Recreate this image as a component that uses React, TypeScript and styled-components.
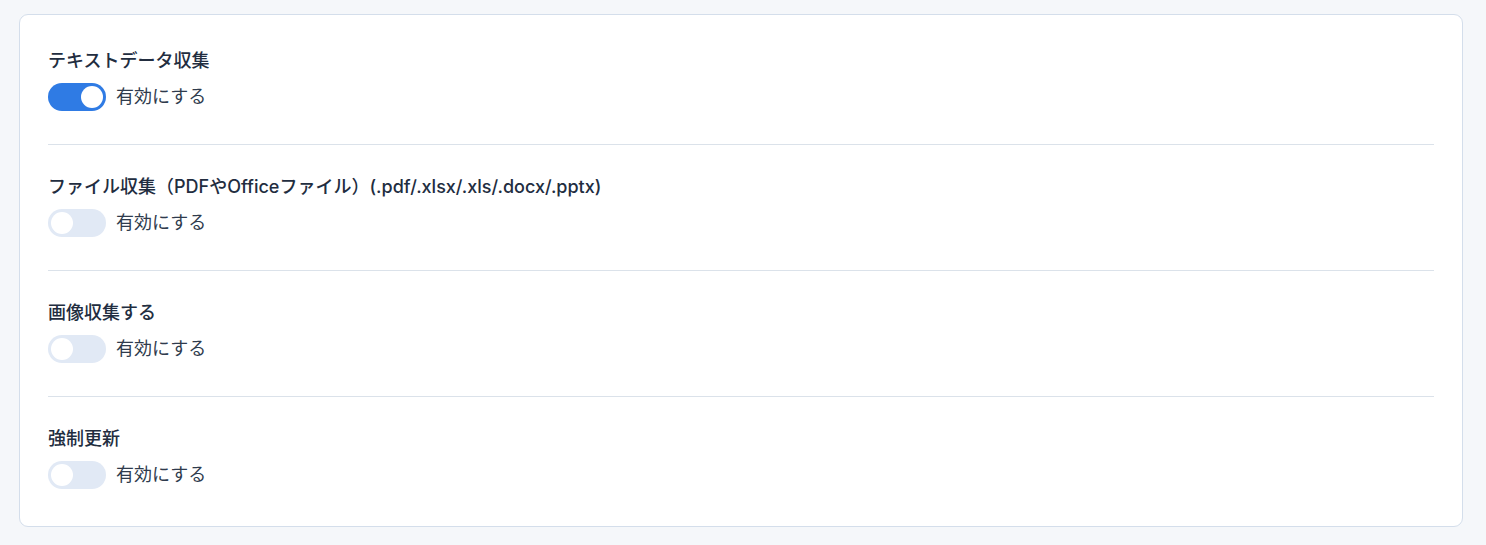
import { useState } from "react";
import styled, { createGlobalStyle } from "styled-components";

const GlobalStyle = createGlobalStyle`
  html, body {
    margin: 0;
    padding: 0;
    background: #f5f7fa;
  }
  body {
    font-family: Inter, "Noto Sans CJK JP", sans-serif;
    color: #1f2a3c;
  }
`;

type Setting = {
  id: string;
  title: string;
  enabled: boolean;
};

const initialSettings: Setting[] = [
  { id: "text", title: "テキストデータ収集", enabled: true },
  {
    id: "file",
    title: "ファイル収集（PDFやOfficeファイル）(.pdf/.xlsx/.xls/.docx/.pptx)",
    enabled: false,
  },
  { id: "image", title: "画像収集する", enabled: false },
  { id: "force", title: "強制更新", enabled: false },
];

function App() {
  const [settings, setSettings] = useState(initialSettings);

  const toggle = (id: string) =>
    setSettings((prev) =>
      prev.map((s) => (s.id === id ? { ...s, enabled: !s.enabled } : s))
    );

  return (
    <>
      <GlobalStyle />
      <Page>
        <Card>
          {settings.map((s) => (
            <Section key={s.id}>
              <Title>{s.title}</Title>
              <SwitchRow>
                <Switch
                  type="button"
                  role="switch"
                  aria-checked={s.enabled}
                  $on={s.enabled}
                  onClick={() => toggle(s.id)}
                >
                  <Knob $on={s.enabled} />
                </Switch>
                <SwitchLabel>有効にする</SwitchLabel>
              </SwitchRow>
            </Section>
          ))}
        </Card>
      </Page>
    </>
  );
}

export default App;

const Page = styled.main`
  padding: 14px 23px 18px 19px;
`;

const Card = styled.div`
  background: #ffffff;
  border: 1px solid #d4deeb;
  border-radius: 9px;
  padding: 4px 28px 4px;
`;

const Section = styled.section`
  padding: 29.5px 0 33.5px;
  border-bottom: 1px solid #dbe2ea;

  &:last-child {
    border-bottom: none;
  }
`;

const Title = styled.div`
  font-size: 18px;
  font-weight: 500;
  line-height: 24px;
  color: #222d3f;
  margin-bottom: 10px;
`;

const SwitchRow = styled.div`
  display: flex;
  align-items: center;
  gap: 10px;
`;

const Switch = styled.button<{ $on: boolean }>`
  position: relative;
  width: 58px;
  height: 28px;
  padding: 0;
  border: none;
  border-radius: 14px;
  background: ${(p) => (p.$on ? "#2f7be4" : "#e1e9f5")};
  cursor: pointer;
  flex-shrink: 0;
`;

const Knob = styled.span<{ $on: boolean }>`
  position: absolute;
  top: 3px;
  left: ${(p) => (p.$on ? "33px" : "3px")};
  width: 22px;
  height: 22px;
  border-radius: 50%;
  background: #ffffff;
  transition: left 0.15s;
`;

const SwitchLabel = styled.span`
  font-size: 18px;
  line-height: 24px;
  color: #2f3b4d;
`;
